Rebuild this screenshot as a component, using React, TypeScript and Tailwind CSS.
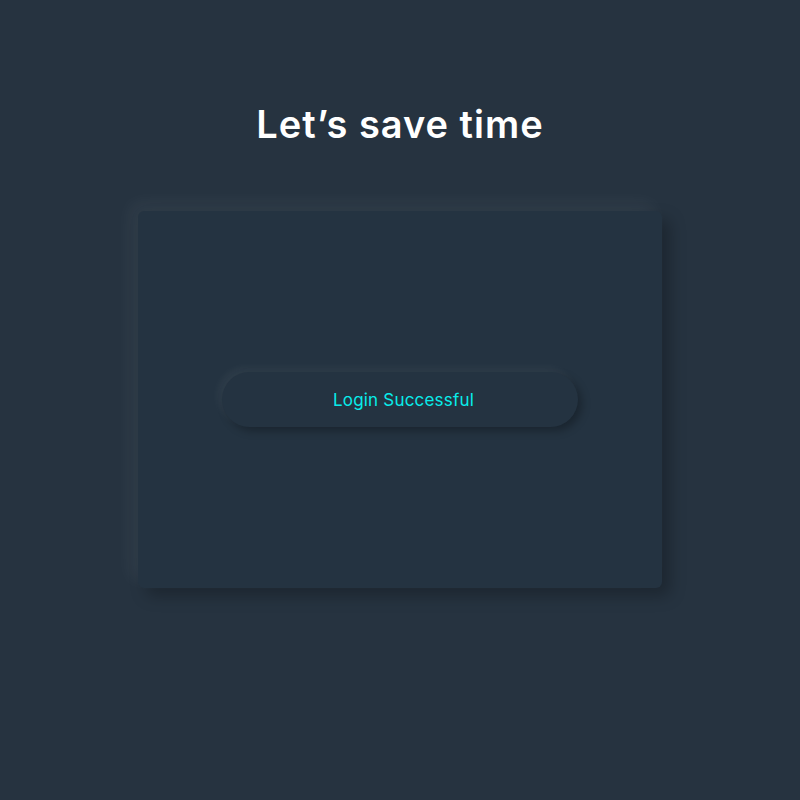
export default function App() {
  return (
    <div className="min-h-[800px] w-full bg-[#263340] flex flex-col items-center font-['Inter','Liberation_Sans',sans-serif]">
      <h1 className="mt-[100px] text-[38px] leading-[48px] font-semibold text-white tracking-[1px]">
        Let’s save time
      </h1>
      <div className="mt-[63px] w-[524px] h-[377px] rounded-[6px] bg-[#243341] flex items-center justify-center shadow-[-8px_-8px_18px_rgba(255,255,255,0.05),8px_8px_16px_rgba(0,0,0,0.25)]">
        <div className="w-[356px] h-[55px] rounded-full bg-[#243341] flex items-center justify-center shadow-[-4px_-4px_8px_rgba(255,255,255,0.05),4px_4px_8px_rgba(0,0,0,0.28)]">
          <span className="pl-[7px] pt-[3px] text-[17px] tracking-[0.2px] text-[#08ecea]">Login Successful</span>
        </div>
      </div>
    </div>
  );
}
